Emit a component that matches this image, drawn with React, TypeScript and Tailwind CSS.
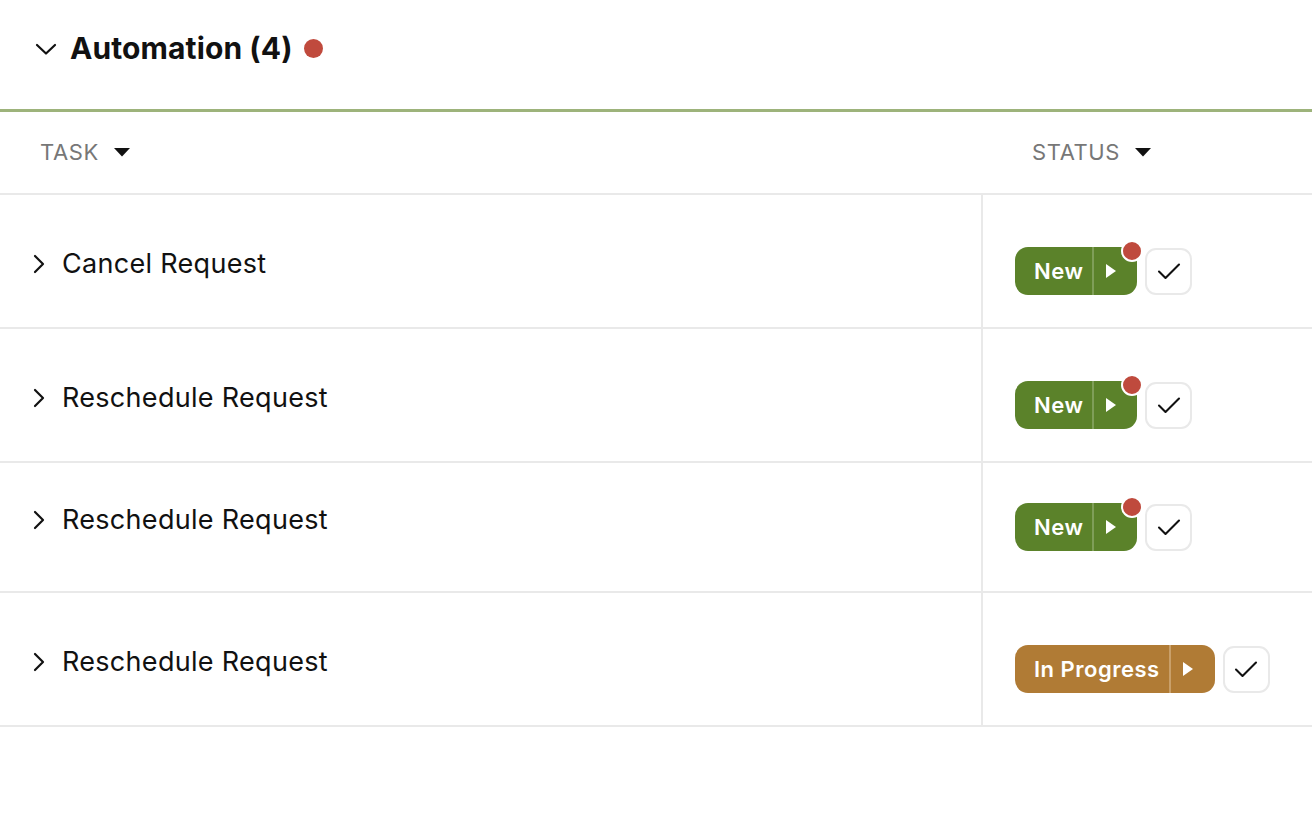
import React from "react";

type Row = {
  title: string;
  status: "new" | "progress";
  dot: boolean;
  h: string;
  textPad: string;
  badgePad: string;
};

const ROWS: Row[] = [
  { title: "Cancel Request", status: "new", dot: true, h: "h-[134px]", textPad: "pt-[53px]", badgePad: "pt-[52px]" },
  { title: "Reschedule Request", status: "new", dot: true, h: "h-[134px]", textPad: "pt-[53px]", badgePad: "pt-[52px]" },
  { title: "Reschedule Request", status: "new", dot: true, h: "h-[130px]", textPad: "pt-[41px]", badgePad: "pt-[40px]" },
  { title: "Reschedule Request", status: "progress", dot: false, h: "h-[134px]", textPad: "pt-[53px]", badgePad: "pt-[52px]" },
];

function Caret() {
  return (
    <svg width="16" height="9" viewBox="0 0 16 9" className="ml-[15px]">
      <path d="M0 0 H16 L8 8.5 Z" fill="#111" />
    </svg>
  );
}

function Chevron({ down }: { down?: boolean }) {
  return down ? (
    <svg width="22" height="14" viewBox="0 0 22 14" fill="none">
      <path d="M2 3 L11 11.5 L20 3" stroke="#111" strokeWidth="2.2" strokeLinecap="round" strokeLinejoin="round" />
    </svg>
  ) : (
    <svg width="14" height="20" viewBox="0 0 14 20" fill="none">
      <path d="M3 2 L11 10 L3 18" stroke="#111" strokeWidth="2.2" strokeLinecap="round" strokeLinejoin="round" />
    </svg>
  );
}

function StatusBadge({ status, dot }: { status: Row["status"]; dot: boolean }) {
  const isNew = status === "new";
  return (
    <div className="flex items-center gap-[8px]">
      <div
        className={
          "relative flex h-[48px] items-stretch rounded-[13px] text-white " +
          (isNew ? "bg-[#5b822a]" : "bg-[#b07b35]")
        }
      >
        <span className="flex items-center pl-[19px] pr-[9px] text-[22px] font-semibold tracking-[0.5px]">
          {isNew ? "New" : "In Progress"}
        </span>
        <span className={"w-[2px] " + (isNew ? "bg-[#7f9e58]" : "bg-[#c9a06a]")} />
        <span className={"flex items-center pl-[12px] " + (isNew ? "pr-[21px]" : "pr-[22px]")}>
          <svg width="10" height="14" viewBox="0 0 10 14">
            <path d="M0 0 L10 7 L0 14 Z" fill="#fff" />
          </svg>
        </span>
        {dot && (
          <span className="absolute right-[-6px] top-[-7px] h-[22px] w-[22px] rounded-full border-2 border-white bg-[#bf4a3d]" />
        )}
      </div>
      <div className="flex h-[47px] w-[47px] items-center justify-center rounded-[11px] border-2 border-[#e9e9e9] bg-white">
        <svg width="24" height="19" viewBox="0 0 24 19" fill="none">
          <path d="M2 9.5 L8.5 16 L22 2.5" stroke="#111" strokeWidth="2.1" strokeLinecap="round" strokeLinejoin="round" />
        </svg>
      </div>
    </div>
  );
}

export default function App() {
  return (
    <div className="h-[824px] w-[1312px] bg-white font-['Inter',sans-serif] text-[#111]">
      <div className="flex h-[109px] items-center pl-[35px] pb-[12px]">
        <Chevron down />
        <h2 className="ml-[13px] text-[30px] font-bold tracking-[0.1px]">Automation (4)</h2>
        <span className="ml-[11px] h-[19px] w-[19px] rounded-full bg-[#c04a3d]" />
      </div>
      <div className="h-[3px] bg-[#9db37b]" />
      <div className="flex h-[83px] items-center border-b-2 border-[#e9e9e9] text-[22px] tracking-[0.6px] text-[#777]">
        <div className="flex flex-1 items-center pl-[40px]">
          TASK
          <Caret />
        </div>
        <div className="flex w-[280px] items-center">
          STATUS
          <Caret />
        </div>
      </div>
      {ROWS.map((r, i) => (
        <div key={i} className={"flex border-b-2 border-[#e9e9e9] " + r.h}>
          <div className={"flex flex-1 items-start pl-[32px] " + r.textPad}>
            <span className="mt-[6px]">
              <Chevron />
            </span>
            <span className="ml-[16px] text-[27px] leading-[32px] tracking-[0.3px]">{r.title}</span>
          </div>
          <div className={"w-[331px] border-l-2 border-[#e9e9e9] pl-[32px] " + r.badgePad}>
            <StatusBadge status={r.status} dot={r.dot} />
          </div>
        </div>
      ))}
    </div>
  );
}
